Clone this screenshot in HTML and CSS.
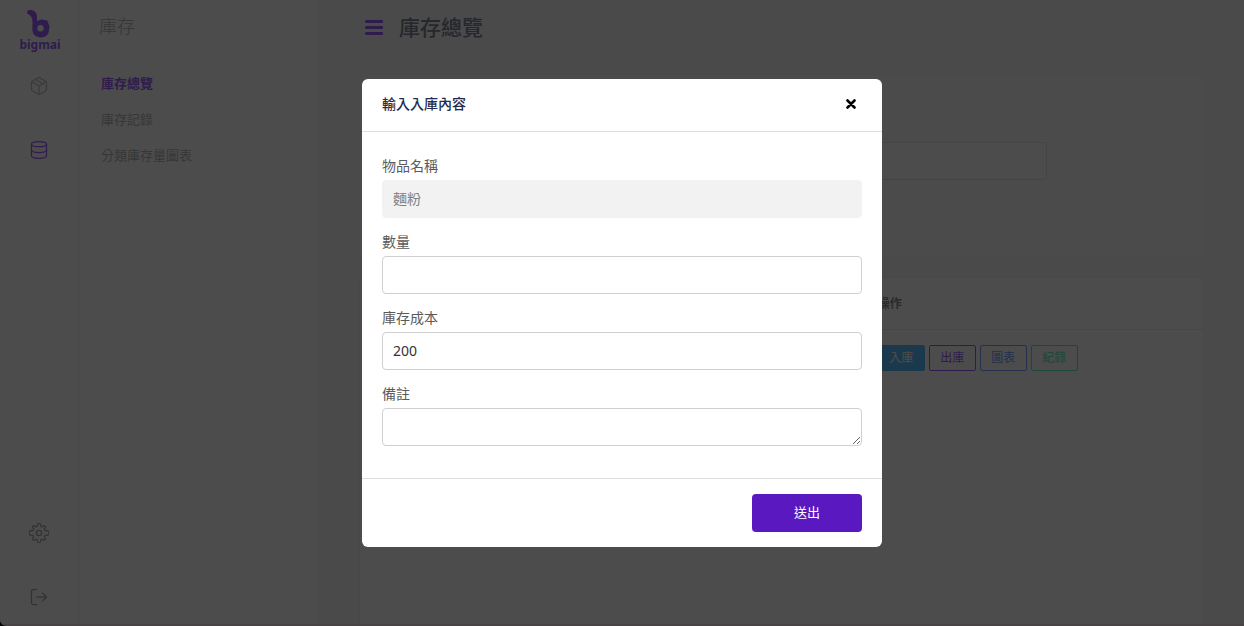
FILE: index.html
```html
<!DOCTYPE html>
<html lang="zh-Hant">
<head>
<meta charset="utf-8">
<meta name="viewport" content="width=device-width, initial-scale=1">
<title>庫存總覽</title>
<link rel="stylesheet" href="styles.css">
</head>
<body>
<div class="app">
  <aside class="rail">
    <a class="logo" href="#">
      <svg class="logo-mark" viewBox="0 0 26 30" width="26" height="30" aria-hidden="true">
        <path fill="currentColor" fill-rule="evenodd" d="M2.500 1C6.500 .600 9.800 3 10 7.500C10 9.500 9.800 11 10.500 12.200C12.500 10.500 15.500 9.800 17.500 11C20 10.800 21.500 12.500 21.300 14.500C22.800 16.500 22.800 18.500 22 20.500C22.200 25 19 28.300 14 28.400C9 28.500 5.500 25.500 5.300 20.500C5.200 17 5.800 14.500 5.300 11C4.900 8 3.500 6 1 5C-.800 4 -.200 1.300 2.500 1ZM13.500 16.100a3.200 3.200 0 1 0 0 6.400a3.200 3.200 0 1 0 0-6.400Z"/>
      </svg>
      <span class="logo-name">bigmai</span>
    </a>
    <nav class="rail-nav">
      <a class="rail-link" href="#" aria-label="物品">
        <svg class="icon" viewBox="0 0 24 24"><path d="m16.500 9.400-9-5.190M21 16V8a2 2 0 0 0-1-1.730l-7-4a2 2 0 0 0-2 0l-7 4A2 2 0 0 0 3 8v8a2 2 0 0 0 1 1.730l7 4a2 2 0 0 0 2 0l7-4A2 2 0 0 0 21 16z"/><path d="M3.270 6.960 12 12.010l8.730-5.050M12 22.080V12"/></svg>
      </a>
      <a class="rail-link is-active" href="#" aria-label="庫存">
        <svg class="icon" viewBox="0 0 24 24"><ellipse cx="12" cy="5" rx="9" ry="3"/><path d="M21 12c0 1.660-4 3-9 3s-9-1.340-9-3"/><path d="M3 5v14c0 1.660 4 3 9 3s9-1.340 9-3V5"/></svg>
      </a>
    </nav>
    <nav class="rail-nav rail-nav-bottom">
      <a class="rail-link" href="#" aria-label="設定">
        <svg class="icon icon-dark" viewBox="0 0 24 24"><circle cx="12" cy="12" r="3.200"/><path d="M10.200 2.200a1.800 1.800 0 0 1 3.600 0v.900a1.500 1.500 0 0 0 2.500 1.100l.600-.600a1.800 1.800 0 0 1 2.500 2.500l-.600.600a1.500 1.500 0 0 0 1.100 2.500h1.400a1.800 1.800 0 0 1 0 5.600h-1.400a1.500 1.500 0 0 0-1.100 2.500l.600.600a1.800 1.800 0 0 1-2.500 2.500l-.600-.600a1.500 1.500 0 0 0-2.500 1.100v.900a1.800 1.800 0 0 1-3.600 0v-.900a1.500 1.500 0 0 0-2.500-1.100l-.600.600a1.800 1.800 0 0 1-2.500-2.500l.600-.600a1.500 1.500 0 0 0-1.100-2.500H2.700a1.800 1.800 0 0 1 0-5.600h1.400a1.500 1.500 0 0 0 1.100-2.500l-.600-.600a1.800 1.800 0 0 1 2.500-2.500l.600.600a1.500 1.500 0 0 0 2.500-1.100z"/></svg>
      </a>
      <a class="rail-link" href="#" aria-label="登出">
        <svg class="icon icon-dark" viewBox="0 0 24 24"><path d="M9 21H5a2 2 0 0 1-2-2V5a2 2 0 0 1 2-2h4M16 17l5-5-5-5M21 12H9"/></svg>
      </a>
    </nav>
  </aside>

  <aside class="submenu">
    <h2 class="submenu-title">庫存</h2>
    <nav class="submenu-nav">
      <a class="submenu-link is-active" href="#">庫存總覽</a>
      <a class="submenu-link" href="#">庫存記錄</a>
      <a class="submenu-link" href="#">分類庫存量圖表</a>
    </nav>
  </aside>

  <main class="main">
    <header class="page-head">
      <button class="menu-button" type="button" aria-label="選單"><span class="bar"></span><span class="bar"></span><span class="bar"></span></button>
      <h1 class="page-title">庫存總覽</h1>
    </header>
    <section class="card filter-card">
      <input class="filter-input" type="text" aria-label="搜尋">
    </section>
    <section class="card table-card">
      <table class="stock-table">
        <thead>
          <tr><th class="col-item"></th><th>操作</th></tr>
        </thead>
        <tbody>
          <tr>
            <td></td>
            <td>
              <div class="actions">
                <button class="action action-in" type="button">入庫</button>
                <button class="action action-out" type="button">出庫</button>
                <button class="action action-chart" type="button">圖表</button>
                <button class="action action-log" type="button">紀錄</button>
              </div>
            </td>
          </tr>
        </tbody>
      </table>
    </section>
  </main>

  <div class="scrim">
    <form class="modal" role="dialog" aria-labelledby="modal-title">
      <header class="modal-head">
        <h2 class="modal-title" id="modal-title">輸入入庫內容</h2>
        <button class="close" type="button" aria-label="關閉">
          <svg viewBox="0 0 10 10" width="10" height="10" aria-hidden="true"><path d="M1.500 1.500l7 7M8.500 1.500l-7 7" stroke="currentColor" stroke-width="2.600" stroke-linecap="round"/></svg>
        </button>
      </header>
      <div class="modal-body">
        <div class="field">
          <label class="label" for="item">物品名稱</label>
          <input class="control" id="item" type="text" value="麵粉" disabled>
        </div>
        <div class="field">
          <label class="label" for="qty">數量</label>
          <input class="control" id="qty" type="text">
        </div>
        <div class="field">
          <label class="label" for="cost">庫存成本</label>
          <input class="control" id="cost" type="text" value="200">
        </div>
        <div class="field">
          <label class="label" for="note">備註</label>
          <textarea class="control" id="note" rows="1"></textarea>
        </div>
      </div>
      <footer class="modal-foot">
        <button class="submit" type="submit">送出</button>
      </footer>
    </form>
  </div>
</div>
</body>
</html>
```

FILE: styles.css
```css
* {
  box-sizing: border-box;
}

html {
  background: #000;
}

body {
  margin: 0;
  font-family: "Noto Sans", "Noto Sans CJK TC", sans-serif;
  font-size: 14px;
  color: #5a5a5a;
}

a {
  color: inherit;
  text-decoration: none;
}

button,
input,
textarea {
  font: inherit;
}

h1,
h2 {
  margin: 0;
}

.app {
  display: flex;
  height: 100vh;
  overflow: hidden;
  background: #f7f7fa;
  border-bottom: 2px solid #f0e4e8;
  border-bottom-left-radius: 6px;
}

/* icon rail */
.rail {
  display: flex;
  flex-direction: column;
  flex: none;
  width: 79px;
  background: #fff;
  border-right: 1px solid #f2f2f4;
}

.logo {
  display: flex;
  flex-direction: column;
  align-items: center;
  padding: 9px 0 0 2px;
  color: #a060ff;
}

.logo-mark {
  display: block;
}

.logo-name {
  font-size: 12px;
  font-weight: 700;
  line-height: 12px;
}

.rail-nav {
  display: flex;
  flex-direction: column;
  padding-top: 3px;
}

.rail-nav-bottom {
  gap: 44px;
  margin-top: auto;
  padding-bottom: 17px;
}

.rail-link {
  display: flex;
  align-items: center;
  justify-content: center;
  height: 64px;
  color: #c4c4c8;
}

.rail-nav-bottom .rail-link {
  height: 20px;
}

.rail-link.is-active {
  color: #a060ff;
}

.icon {
  width: 20px;
  height: 20px;
  fill: none;
  stroke: currentColor;
  stroke-width: 1.5;
  stroke-linecap: round;
  stroke-linejoin: round;
}

.icon-dark {
  color: #a8a8ac;
}

/* section menu */
.submenu {
  flex: none;
  width: 240px;
  padding: 13px 20px;
  background: #fff;
}

.submenu-title {
  color: #b4b4b8;
  font-size: 18px;
  font-weight: 300;
  line-height: 26px;
}

.submenu-nav {
  display: flex;
  flex-direction: column;
  padding: 26px 2px;
}

.submenu-link {
  color: #b8b8bc;
  font-size: 13px;
  line-height: 36px;
}

.submenu-link.is-active {
  color: #a060ff;
  font-weight: 700;
}

/* main column */
.main {
  flex: 1;
  display: flex;
  flex-direction: column;
  min-width: 0;
  padding: 0 40px;
}

.page-head {
  display: flex;
  align-items: center;
  gap: 16px;
  height: 54px;
  padding-left: 6px;
}

.menu-button {
  display: flex;
  flex-direction: column;
  gap: 3px;
  width: 18px;
  padding: 0;
  background: none;
  border: 0;
}

.bar {
  height: 3px;
  background: #a060ff;
  border-radius: 1px;
}

.page-title {
  color: #7c8494;
  font-size: 21px;
  font-weight: 500;
  line-height: 30px;
}

.card {
  border-radius: 6px;
}

.filter-card {
  margin-top: 22px;
  padding: 66px 20px 76px;
  background: #fafafc;
}

.filter-input {
  display: block;
  width: 83%;
  height: 38px;
  background: #fff;
  border: 1px solid #e4e4e8;
  border-radius: 4px;
}

.table-card {
  flex: 1;
  margin-top: 21px;
  background: #fff;
  border: 1px solid #f0f0f2;
  border-bottom: 0;
  border-radius: 6px 6px 0 0;
}

.stock-table {
  width: 100%;
  table-layout: fixed;
  border-collapse: collapse;
}

.stock-table th {
  height: 51px;
  padding: 0 12px;
  border-bottom: 1px solid #ececee;
  color: #8c8c9c;
  font-size: 12px;
  font-weight: 700;
  text-align: left;
}

.stock-table .col-item {
  width: 60%;
}

.stock-table td {
  padding: 15px 12px;
}

.actions {
  display: flex;
  gap: 4px;
}

.action {
  width: 47px;
  height: 26px;
  padding: 0 0 1px;
  background: none;
  border: 1px solid currentColor;
  border-radius: 2px;
  font-size: 12px;
}

.action-in {
  background: #5cc0ff;
  border-color: #5cc0ff;
  color: #fff;
}

.action-out {
  color: #a060ff;
}

.action-chart {
  color: #78a0ff;
}

.action-log {
  color: #58f0c0;
}

/* dialog */
.scrim {
  position: fixed;
  inset: 0;
  display: flex;
  align-items: center;
  justify-content: center;
  background: rgba(0, 0, 0, 0.7);
}

.modal {
  width: 520px;
  max-width: 100%;
  background: #fff;
  border-radius: 6px;
}

.modal-head {
  display: flex;
  align-items: center;
  justify-content: space-between;
  height: 53px;
  padding: 0 20px 2px;
  border-bottom: 1px solid #dedede;
}

.modal-title {
  color: #242b4d;
  font-size: 14px;
  font-weight: 500;
  line-height: 20px;
}

.close {
  display: flex;
  padding: 6px;
  background: none;
  border: 0;
  color: #000;
}

.modal-body {
  display: flex;
  flex-direction: column;
  gap: 14px;
  padding: 24px 20px 32px;
}

.field {
  display: flex;
  flex-direction: column;
  gap: 4px;
}

.label {
  line-height: 20px;
}

.control {
  display: block;
  width: 100%;
  height: 38px;
  padding: 7px 10px 9px;
  background: #fff;
  border: 1px solid #d0d0d0;
  border-radius: 4px;
  color: #333;
  line-height: 20px;
}

.control:disabled {
  background: #f2f2f2;
  border-color: #f2f2f2;
  color: #808080;
}

textarea.control {
  resize: vertical;
  overflow: hidden;
}

.modal-foot {
  display: flex;
  justify-content: flex-end;
  padding: 15px 20px;
  border-top: 1px solid #dedede;
}

.submit {
  width: 110px;
  height: 38px;
  padding: 0 0 3px;
  background: #5a18c0;
  border: 0;
  border-radius: 4px;
  color: #fff;
  font-size: 13px;
}
```
